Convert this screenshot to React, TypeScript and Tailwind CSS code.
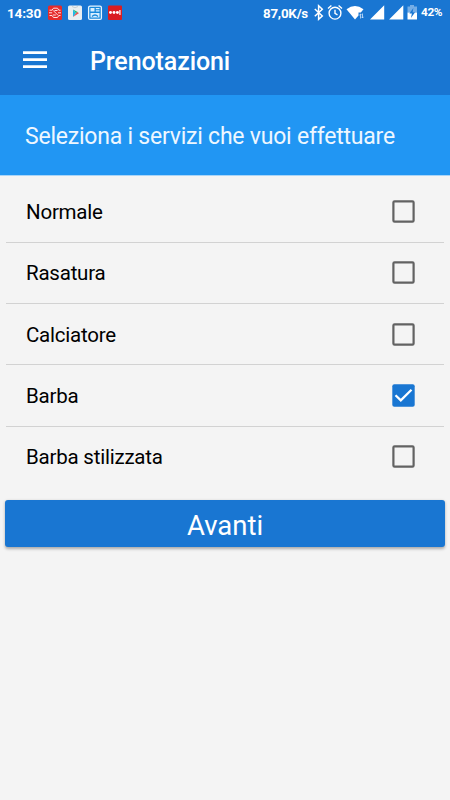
import React, { useState } from 'react';

const services = ['Normale', 'Rasatura', 'Calciatore', 'Barba', 'Barba stilizzata'];

function NotificationIcons() {
  return (
    <svg width="76" height="16" viewBox="48 5 76 16" className="ml-[6px] shrink-0">
      <rect x="48" y="5.5" width="14" height="14.5" rx="1.5" fill="#e52b2b" />
      <g fill="none" stroke="#ffdede" strokeWidth="1">
        <path d="M49.5 10.2h2.5l1.5-2h4l1.3 2h1.7M49.5 15.5h2.5l1.5 2h4l1.3-2h1.7M49 12.8h3.2M61 12.8h-3M53 10.3l5 5M57.5 10.5h-3M52.8 15h3" />
      </g>
      <rect x="68" y="5.5" width="14" height="14.5" rx="1.5" fill="#e9eef1" />
      <path d="M72 6.5q3 2.5 6 0" fill="none" stroke="#c3cfd6" />
      <path d="M73 9.5v7.5l3-3.7z" fill="#20b8e8" />
      <path d="M73 9.5l3 3.8 1.7-1.2z" fill="#25b86f" />
      <path d="M73 17l3-3.7 1.7-1.2 1.2 1.2z" fill="#f0524f" />
      <rect x="88.6" y="6.1" width="12.8" height="13.3" rx="1.5" fill="#1688dc" stroke="#e5f4ff" strokeWidth="1.3" />
      <path d="M90.5 8h4v3.5h-4zM95.8 8h3.7v1.3h-3.7zM95.8 10.3h3.7v1.3h-3.7zM90.5 13h9v4.5h-9z" fill="#d9efff" />
      <path d="M92 16.5q3-3 6 0" stroke="#1688dc" strokeWidth="1.3" fill="none" />
      <rect x="108" y="5.5" width="14" height="14.5" rx="1" fill="#d91d22" />
      <g fill="#fff"><circle cx="110.5" cy="12.5" r="1.45" /><circle cx="114" cy="12.5" r="1.45" /><circle cx="117.4" cy="12.5" r="1.45" /><path d="M119.3 10h1.2v5h-1.2z" /></g>
    </svg>
  );
}

function SystemIcons() {
  return (
    <svg width="106" height="18" viewBox="312 4 106 18" className="shrink-0">
      <path d="M314.8 9l7.5 7-3.7 3.4V5.8l3.7 3.4-7.5 7" fill="none" stroke="#fff" strokeWidth="1.5" />
      <g fill="none" stroke="#fff" strokeWidth="1.4">
        <circle cx="335" cy="13.2" r="5.9" />
        <path d="M335 9.7v3.7l2.5 1.5M328 8.5l3.4-3M342 8.5l-3.4-3" />
      </g>
      <path d="M346.5 9.2q8.5-6.2 17 0l-2.7 3.4h-2.3v2.8L355 19.4z" fill="#fff" />
      <path d="M360.5 14v4.5m-1.2-3.3 1.2-1.2 1.2 1.2M362.5 13.5V18m-1-1.2 1 1.2 1-1.2" fill="none" stroke="#cce2fa" strokeWidth=".8" />
      <path d="M384.2 5.3v14.2H370zM403.3 5.3v14.2h-14.2z" fill="#fff" />
      <path d="M410 5h4v1.5h3v6h-9.5v-6h2.5z" fill="#75ade6" />
      <path d="M407.5 12.5h9.5v7h-9.5z" fill="#fff" />
      <path d="M413.4 8l-4 5.6h2.5l-1 4.4 4.2-5.8h-2.5z" fill="#1976d2" />
    </svg>
  );
}

function Checkbox({ checked }: { checked: boolean }) {
  return (
    <svg width="23" height="23" viewBox="0 0 23 23" className="shrink-0">
      {checked ? (
        <>
          <rect x=".3" y=".3" width="22.4" height="22.4" rx="2" fill="#1976d2" />
          <path d="M3.5 11.2l5.3 5.2L19.5 5.8" fill="none" stroke="#fff" strokeWidth="2.3" />
        </>
      ) : (
        <rect x="1.4" y="1.4" width="20.2" height="20.2" rx="1.2" fill="none" stroke="#626262" strokeWidth="2.2" />
      )}
    </svg>
  );
}

export default function App() {
  const [selected, setSelected] = useState<string[]>(['Barba']);
  const toggle = (name: string) =>
    setSelected((s) => (s.includes(name) ? s.filter((n) => n !== name) : [...s, name]));

  return (
    <main className="h-[800px] w-[450px] overflow-hidden bg-[#f4f4f4] font-['Roboto',sans-serif] text-black">
      <header className="h-[95px] bg-[#1976d2] text-white">
        <div className="flex h-[26px] items-center pl-[7px] pr-2 font-bold">
          <span className="w-[35px] whitespace-nowrap pt-[1px] text-[13.6px] leading-none tracking-[-0.2px]">14:30</span>
          <NotificationIcons />
          <span className="ml-auto mr-[4px] whitespace-nowrap pt-[1px] text-[13.3px] leading-none tracking-[-0.2px]">87,0K/s</span>
          <SystemIcons />
          <span className="ml-[3px] w-[21px] whitespace-nowrap text-[11.8px] leading-none tracking-[-0.35px]">42%</span>
        </div>
        <div className="flex h-[69px] items-center pl-[23px]">
          <button aria-label="Menu" className="pb-[2px]">
            <svg width="24" height="18" viewBox="0 0 24 18" fill="#fff">
              <path d="M0 .3h24V3H0zM0 7.3h24V10H0zM0 14.2h24v2.7H0z" />
            </svg>
          </button>
          <h1 className="ml-[43px] pt-[1px] text-[25px] leading-none font-medium tracking-[-0.1px]">Prenotazioni</h1>
        </div>
      </header>
      <h2 className="flex h-[81px] items-center border-b border-[#a9d5f8] bg-[#2196f3] pl-[25px] pt-[5px] text-[23px] tracking-[-0.22px] text-[#eef7ff]">
        <span className="whitespace-nowrap">Seleziona i servizi che vuoi effettuare</span>
      </h2>
      <ul className="px-[6px] pt-[5.4px]">
        {services.map((name) => (
          <li
            key={name}
            onClick={() => toggle(name)}
            className="flex h-[61.3px] items-center justify-between border-b-[1.4px] border-[#d2d2d2] pl-5 pr-[29px] text-[20.5px] tracking-[-0.22px] last:border-transparent"
          >
            <span className="pt-[1.6px]">{name}</span>
            <Checkbox checked={selected.includes(name)} />
          </li>
        ))}
      </ul>
      <div className="px-[5px] pt-[12.5px]">
        <button className="flex h-[46.5px] w-full items-center justify-center rounded-[3px] bg-[#1976d2] pt-[3px] text-[27.5px] text-white shadow-[0_1.5px_3px_rgba(0,0,0,0.3)]">
          Avanti
        </button>
      </div>
    </main>
  );
}
